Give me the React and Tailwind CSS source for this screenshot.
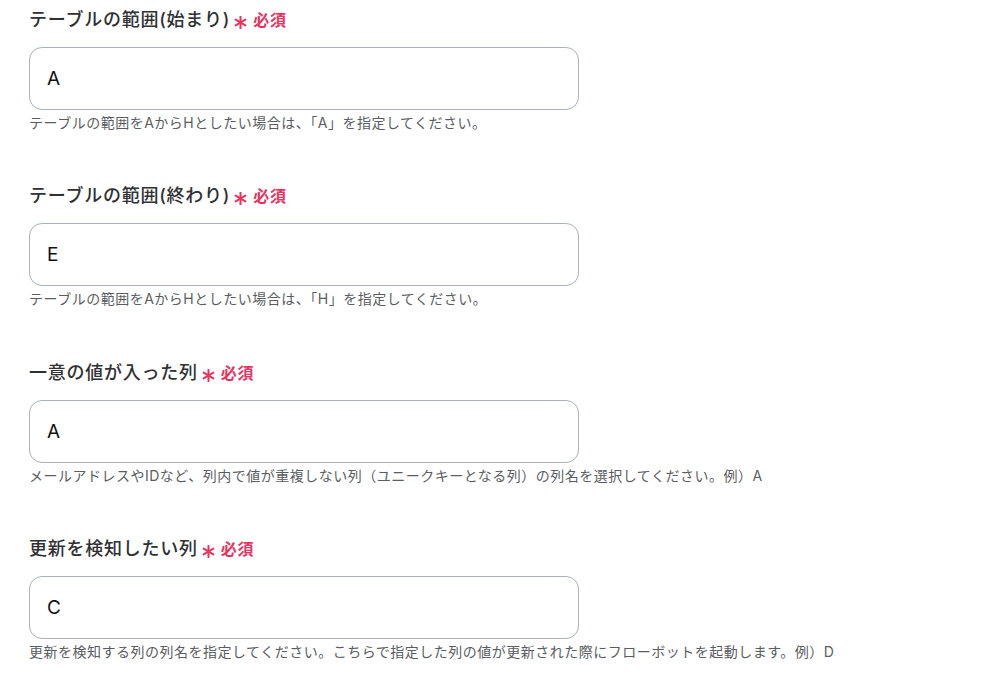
import React from 'react';

const FIELDS = [
  {
    label: 'テーブルの範囲(始まり)',
    value: 'A',
    help: 'テーブルの範囲をAからHとしたい場合は、「A」を指定してください。',
  },
  {
    label: 'テーブルの範囲(終わり)',
    value: 'E',
    help: 'テーブルの範囲をAからHとしたい場合は、「H」を指定してください。',
  },
  {
    label: '一意の値が入った列',
    value: 'A',
    help: 'メールアドレスやIDなど、列内で値が重複しない列（ユニークキーとなる列）の列名を選択してください。例）A',
  },
  {
    label: '更新を検知したい列',
    value: 'C',
    help: '更新を検知する列の列名を指定してください。こちらで指定した列の値が更新された際にフローボットを起動します。例）D',
  },
];

function Asterisk() {
  return (
    <svg width="13" height="13" viewBox="0 0 12 12" className="mt-[5px]">
      <g stroke="#e8345f" strokeWidth="1.9" strokeLinecap="round">
        <line x1="6" y1="0.8" x2="6" y2="11.2" />
        <line x1="1.5" y1="3.4" x2="10.5" y2="8.6" />
        <line x1="1.5" y1="8.6" x2="10.5" y2="3.4" />
      </g>
    </svg>
  );
}

function Field({ label, value, help }) {
  return (
    <div className="mb-[49.3px]">
      <div className="flex items-center h-[28px] mb-[13px]">
        <span className="text-[18px] font-medium text-[#2f3133] leading-[28px] tracking-[0.75px] mr-[4px]">{label}</span>
        <Asterisk />
        <span className="text-[16px] font-bold text-[#e8345f] leading-[28px] tracking-[0.8px] ml-[6px]">必須</span>
      </div>
      <input
        readOnly
        value={value}
        className="block w-[550px] h-[63px] px-[17px] rounded-[13px] border border-[#a9b1bb] bg-white text-[19px] text-[#111] outline-none"
      />
      <p className="mt-[3px] text-[14px] leading-[20px] text-[#5a5d61] tracking-[0.5px]">{help}</p>
    </div>
  );
}

export default function App() {
  return (
    <div
      className="min-h-screen bg-white pl-[29px] pt-[6px]"
      style={{ fontFamily: 'Inter, "Noto Sans CJK JP", sans-serif' }}
    >
      {FIELDS.map((f, i) => (
        <Field key={i} {...f} />
      ))}
    </div>
  );
}
